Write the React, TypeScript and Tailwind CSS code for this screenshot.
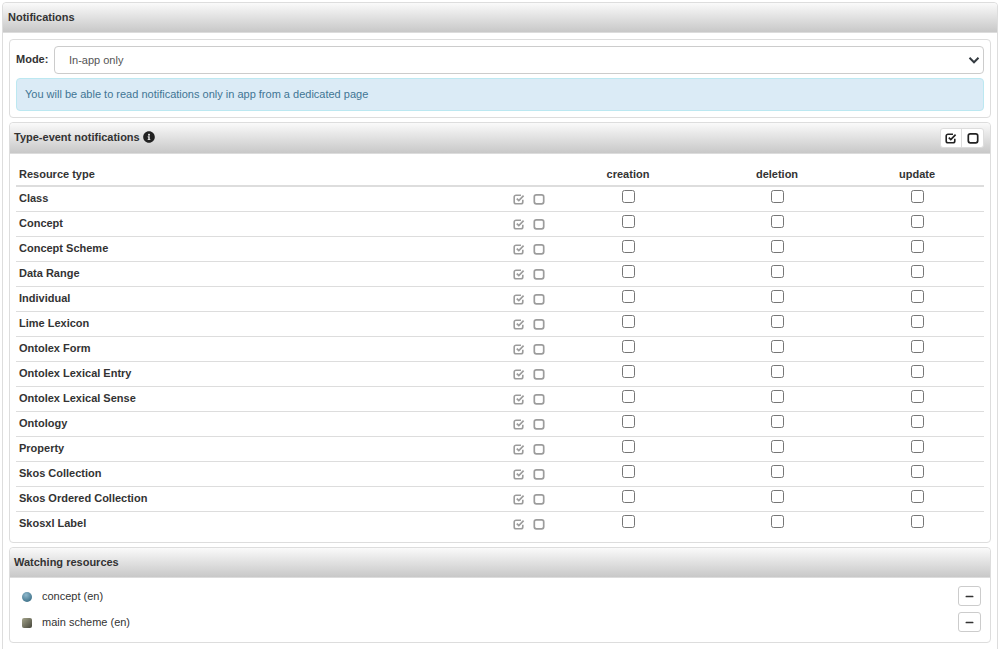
import { FaInfoCircle, FaMinus } from 'react-icons/fa';

const resourceTypes = [
  'Class',
  'Concept',
  'Concept Scheme',
  'Data Range',
  'Individual',
  'Lime Lexicon',
  'Ontolex Form',
  'Ontolex Lexical Entry',
  'Ontolex Lexical Sense',
  'Ontology',
  'Property',
  'Skos Collection',
  'Skos Ordered Collection',
  'Skosxl Label',
];

const headingBar = 'bg-gradient-to-b from-[#fafafa] to-[#c8c8c8] border-b border-[#dcdcdc] font-bold text-[#333]';

function CheckAllIcon({ size = 12 }: { size?: number }) {
  return (
    <svg width={size} height={size} viewBox="0 0 12 12" fill="none" stroke="currentColor">
      <path d="M9.8 6.8v2.2a1.8 1.8 0 0 1-1.8 1.8H3A1.8 1.8 0 0 1 1.2 9V4A1.8 1.8 0 0 1 3 2.2h5" strokeWidth="1.6" />
      <path d="M3.8 5.6 5.8 7.6 10.6 2.6" strokeWidth="1.7" />
    </svg>
  );
}

function CheckNoneIcon({ size = 12 }: { size?: number }) {
  return (
    <svg width={size} height={size} viewBox="0 0 12 12" fill="none" stroke="currentColor">
      <rect x="1.3" y="1.8" width="9.4" height="9" rx="2" strokeWidth="1.7" />
    </svg>
  );
}

function ConceptIcon() {
  return (
    <svg width="10" height="10" viewBox="0 0 10 10">
      <defs>
        <radialGradient id="sphere" cx="0.4" cy="0.3" r="0.75">
          <stop offset="0" stopColor="#8fb8cc" />
          <stop offset="1" stopColor="#3b6f87" />
        </radialGradient>
      </defs>
      <circle cx="5" cy="5" r="5" fill="url(#sphere)" />
    </svg>
  );
}

function SchemeIcon() {
  return (
    <svg width="10" height="10" viewBox="0 0 10 10">
      <defs>
        <linearGradient id="cube" x1="0" y1="0" x2="1" y2="1">
          <stop offset="0" stopColor="#a5a58c" />
          <stop offset="1" stopColor="#45453a" />
        </linearGradient>
      </defs>
      <rect width="10" height="10" rx="2" fill="url(#cube)" />
    </svg>
  );
}

function WatchRow({ icon, label }: { icon: React.ReactNode; label: string }) {
  return (
    <div className="flex h-[26px] items-center">
      <span className="ml-[2px] mt-[2px] flex w-[20px] shrink-0">{icon}</span>
      <span className="flex-1 text-[#333]">{label}</span>
      <button className="flex h-[20px] w-[23px] items-center justify-center rounded-[3px] border border-[#ccc] bg-white text-[#333]">
        <FaMinus size={9} />
      </button>
    </div>
  );
}

export default function App() {
  return (
    <main className="h-screen overflow-hidden bg-white pl-[2px] pt-[2px] pr-[3px] font-['Liberation_Sans',Arial,sans-serif] text-[11px] text-[#333]">
      <div className="h-[700px] rounded-[4px] border border-[#ddd]">
        <div className={`flex h-[30px] items-center rounded-t-[4px] px-[5px] ${headingBar}`}>Notifications</div>

        <div className="px-[6px] pt-[6px]">
          {/* Mode */}
          <section className="rounded-[4px] border border-[#ddd] p-[6px]">
            <div className="flex items-center">
              <label className="w-[38px] shrink-0 pb-[2px] font-bold">Mode:</label>
              <div className="relative flex-1">
                <select className="h-[28px] w-full appearance-none rounded-[4px] border border-[#ccc] bg-white pl-[14px] text-[#555]">
                  <option>In-app only</option>
                </select>
                <svg width="12" height="12" viewBox="0 0 16 16" fill="none" stroke="#343a40" strokeWidth="2.6" className="pointer-events-none absolute right-[4px] top-[8px]">
                  <path d="M2 5l6 6 6-6" />
                </svg>
              </div>
            </div>
            <div className="mt-[4px] flex h-[33px] items-center rounded-[4px] border border-[#bce8f1] bg-[#dbebf6] px-[8px] text-[#3f7594]">
              You will be able to read notifications only in app from a dedicated page
            </div>
          </section>

          {/* Type-event */}
          <section className="mt-[4px] rounded-[4px] border border-[#ddd]">
            <div className={`flex h-[31px] items-center justify-between rounded-t-[4px] pl-[4px] pr-[6px] ${headingBar}`}>
              <span className="flex items-center gap-[3px] pb-[2px]">
                Type-event notifications
                <FaInfoCircle size={12} className="text-[#222]" />
              </span>
              <div className="flex h-[20px] overflow-hidden rounded-[3px] border border-[#ddd] bg-white text-[#222]">
                <button className="flex w-[21px] items-center justify-center border-r border-[#ddd]">
                  <CheckAllIcon />
                </button>
                <button className="flex w-[21px] items-center justify-center">
                  <CheckNoneIcon />
                </button>
              </div>
            </div>

            <div className="px-[6px] pt-[8px] pb-[5px]">
              <table className="w-full table-fixed border-separate border-spacing-0">
                <thead>
                  <tr className="font-bold">
                    <th className="h-[25px] border-b-2 border-[#ddd] pl-[3px] pt-[1px] text-left">Resource type</th>
                    <th className="h-[25px] w-[152px] border-b-2 border-[#ddd] pt-[1px] text-center">creation</th>
                    <th className="h-[25px] w-[146px] border-b-2 border-[#ddd] pt-[1px] text-center">deletion</th>
                    <th className="h-[25px] w-[134px] border-b-2 border-[#ddd] pt-[1px] text-center">update</th>
                  </tr>
                </thead>
                <tbody>
                  {resourceTypes.map((type, i) => {
                    const line = i < resourceTypes.length - 1 ? 'border-b border-[#ddd]' : 'border-b border-transparent';
                    return (
                      <tr key={type}>
                        <td className={`h-[25px] pl-[3px] ${line}`}>
                          <div className="flex items-center justify-between pr-[7px] pb-[1px]">
                            <span className="font-bold">{type}</span>
                            <span className="flex gap-[8px] text-[#9c9c9c]">
                              <CheckAllIcon />
                              <CheckNoneIcon />
                            </span>
                          </div>
                        </td>
                        <td className={`h-[25px] pt-[3px] align-top ${line}`}><input type="checkbox" className="mx-auto block" /></td>
                        <td className={`h-[25px] pt-[3px] align-top ${line}`}><input type="checkbox" className="mx-auto block" /></td>
                        <td className={`h-[25px] pt-[3px] align-top ${line}`}><input type="checkbox" className="mx-auto block" /></td>
                      </tr>
                    );
                  })}
                </tbody>
              </table>
            </div>
          </section>

          {/* Watching */}
          <section className="mt-[4px] rounded-[4px] border border-[#ddd]">
            <div className={`flex h-[30px] items-center rounded-t-[4px] px-[4px] ${headingBar}`}>Watching resources</div>
            <div className="pl-[10px] pr-[9px] pt-[5px] pb-[7px]">
              <WatchRow icon={<ConceptIcon />} label="concept (en)" />
              <WatchRow icon={<SchemeIcon />} label="main scheme (en)" />
            </div>
          </section>
        </div>
      </div>
    </main>
  );
}
